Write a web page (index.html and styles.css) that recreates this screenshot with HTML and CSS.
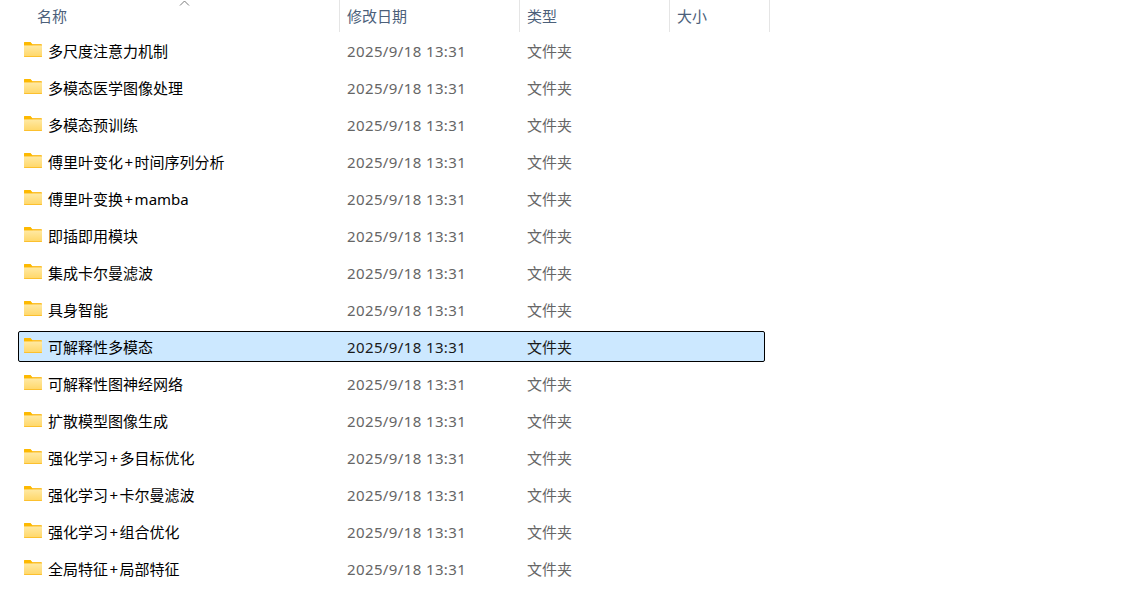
FILE: index.html
```html
<!DOCTYPE html>
<html lang="zh-CN">
<head>
  <meta charset="UTF-8" />
  <title>文件列表</title>
  <link rel="stylesheet" href="styles.css">
</head>
<body>
  <svg class="defs" width="0" height="0" aria-hidden="true">
    <defs>
      <linearGradient id="folderFront" x1="0" y1="0" x2="0" y2="1">
        <stop offset="0" stop-color="#ffe9a3" />
        <stop offset="1" stop-color="#ffd768" />
      </linearGradient>
      <symbol id="folder" viewBox="0 0 18 15">
        <path d="M0 1.200C0 .5.5 0 1.200 0h4.600c.4 0 .7.1 1 .4L8.200 2h8.600c.7 0 1.200.5 1.200 1.200v10.600c0 .7-.5 1.200-1.200 1.200H1.200C.5 15 0 14.500 0 13.800z" fill="#fcc02e" />
        <path d="M0 1.200C0 .5.5 0 1.200 0h4.600c.4 0 .7.1 1 .4L9 3.500H0z" fill="#fdb900" />
        <path d="M0 3.500h18v10.100c0 .5-.5 1-1 1H1c-.5 0-1-.5-1-1z" fill="url(#folderFront)" />
        <path d="M0 14h18c0 .6-.5 1-1 1H1c-.5 0-1-.4-1-1z" fill="#fcc02e" />
      </symbol>
    </defs>
  </svg>

  <div class="list">
    <div class="header">
      <div class="col col-name">名称
        <svg class="sort" width="11" height="6" viewBox="0 0 11 6"><path d="M1 5.500 5.500 1 10 5.500" fill="none" stroke="#7a7a7a" /></svg>
      </div>
      <div class="col col-date">修改日期</div>
      <div class="col col-type">类型</div>
      <div class="col col-size">大小</div>
    </div>
    <div id="rows" class="rows"></div>
  </div>

  <script>
    const names = [
      "多尺度注意力机制", "多模态医学图像处理", "多模态预训练", "傅里叶变化+时间序列分析",
      "傅里叶变换+mamba", "即插即用模块", "集成卡尔曼滤波", "具身智能",
      "可解释性多模态", "可解释性图神经网络", "扩散模型图像生成", "强化学习+多目标优化",
      "强化学习+卡尔曼滤波", "强化学习+组合优化", "全局特征+局部特征"
    ];
    const rows = document.getElementById("rows");
    names.forEach((name, i) => {
      const row = document.createElement("div");
      row.className = i === 8 ? "row selected" : "row";
      const label = name.replace("+", '<span class="plus">+</span>');
      row.innerHTML = `
        <div class="cell-name"><svg class="icon"><use href="#folder"></use></svg><span class="label">${label}</span></div>
        <div class="cell-date">2025/9/18 13:31</div>
        <div class="cell-type">文件夹</div>
      `;
      rows.appendChild(row);
    });
  </script>
</body>
</html>
```

FILE: styles.css
```css
body {
  margin: 0;
  background: #fff;
  font-family: "Noto Sans", "Noto Sans CJK SC", sans-serif;
  font-size: 15px;
  overflow: hidden;
}

.defs {
  position: absolute;
}

.list {
  width: 770px;
}

.header {
  display: grid;
  grid-template-columns: 340px 180px 150px 100px;
  height: 32px;
}

.col {
  position: relative;
  border-right: 1px solid #e5e5e5;
  padding: 7px 0 0 7px;
  color: #4c607a;
  line-height: 18px;
}

.col-name {
  padding-left: 37px;
}

.sort {
  position: absolute;
  left: 179px;
  top: 0;
}

.rows {
  display: flex;
  flex-direction: column;
  gap: 6px;
  margin-top: 3px;
  padding-left: 18px;
  width: 747px;
}

.row {
  display: grid;
  grid-template-columns: 322px 180px 1fr;
  align-items: center;
  height: 31px;
  box-sizing: border-box;
  border: 1px solid transparent;
  border-radius: 2px;
}

.row.selected {
  background: #cce8ff;
  border-color: #000;
}

.cell-name {
  display: flex;
  align-items: center;
  color: #000;
}

.label {
  margin-top: -1px;
}

.plus {
  margin: 0 1.5px;
}

.icon {
  width: 18px;
  height: 15px;
  margin: -2px 6px 0 5px;
}

.cell-date,
.cell-type {
  padding-left: 6px;
  color: #666;
}

.cell-date {
  letter-spacing: 0.38px;
}

.cell-type {
  margin-top: -1px;
}

.selected .cell-date,
.selected .cell-type {
  color: #1a1a1a;
}
```
